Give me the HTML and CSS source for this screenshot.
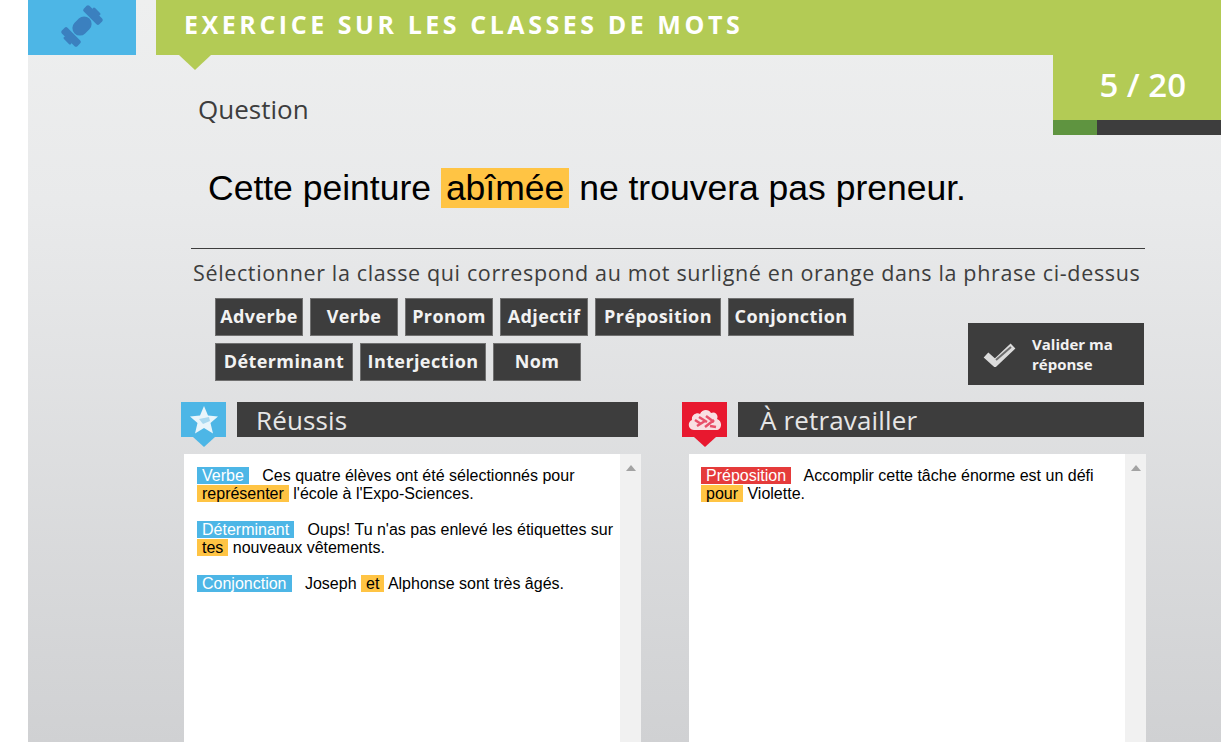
FILE: index.html
```html
<!DOCTYPE html>
<html>

<head>
    <title>Exercice sur les classes de mots</title>
    <link rel="stylesheet" href="styles.css">
</head>

<body>
    <div class="stage">
        <div class="banner">
            <div class="logo-box">
                <svg class="logo" width="56" height="52" viewBox="0 0 56 52">
                    <g transform="rotate(-45 28 26)" fill="#3b80bf">
                        <rect x="17.500" y="18.500" width="21" height="15" rx="7.500"></rect>
                        <rect x="8.500" y="15" width="8" height="22" rx="2"></rect>
                        <rect x="39.500" y="15" width="8" height="22" rx="2"></rect>
                        <rect x="6" y="21" width="3" height="10" rx="1.500"></rect>
                        <rect x="47" y="21" width="3" height="10" rx="1.500"></rect>
                    </g>
                </svg>
            </div>
            <div class="title-band">
                <h1>EXERCICE SUR LES CLASSES DE MOTS</h1>
            </div>
        </div>

        <div class="question-row">
            <h2>Question</h2>
            <div class="counter">
                <div class="count">5 / 20</div>
                <div class="progress">
                    <div class="progress-done"></div>
                </div>
            </div>
        </div>

        <p class="sentence">Cette peinture <span class="word">abîmée</span> ne trouvera pas preneur.</p>

        <div class="instruction">Sélectionner la classe qui correspond au mot surligné en orange dans la phrase ci-dessus</div>

        <div class="answer-row">
            <div class="choices">
                <div class="choice">Adverbe</div>
                <div class="choice">Verbe</div>
                <div class="choice">Pronom</div>
                <div class="choice">Adjectif</div>
                <div class="choice choice-wide">Préposition</div>
                <div class="choice choice-wide">Conjonction</div>
                <div class="choice choice-widest">Déterminant</div>
                <div class="choice choice-wide">Interjection</div>
                <div class="choice">Nom</div>
            </div>
            <div class="validate">
                <svg width="34" height="26" viewBox="0 0 34 26">
                    <path d="M3 14 L12 22 L30 5" fill="none" stroke="#dcdcdc" stroke-width="7"></path>
                    <path d="M13 19 L28 6" fill="none" stroke="#6e6e6e" stroke-width="2"></path>
                </svg>
                <span>Valider ma réponse</span>
            </div>
        </div>

        <div class="results">
            <div class="result">
                <div class="result-head">
                    <div class="badge badge-blue">
                        <svg width="30" height="30" viewBox="0 0 30 30">
                            <path d="M15 1 L19 10.500 L29 11.500 L21.500 18 L24 28.500 L15 23 L6 28.500 L8.500 18 L1 11.500 L11 10.500 Z" fill="#e8f5fb"></path>
                            <path d="M10 14 L20 12 L21 16 L14 19 Z" fill="#a9d9f0"></path>
                        </svg>
                    </div>
                    <div class="result-title">Réussis</div>
                </div>
                <div class="result-list">
                    <div class="list-text">
                        <p><span class="tag tag-blue">Verbe</span> Ces quatre élèves ont été sélectionnés pour <span class="mark">représenter</span> l'école à l'Expo-Sciences.</p>
                        <p><span class="tag tag-blue">Déterminant</span> Oups! Tu n'as pas enlevé les étiquettes sur <span class="mark">tes</span> nouveaux vêtements.</p>
                        <p><span class="tag tag-blue">Conjonction</span> Joseph <span class="mark">et</span> Alphonse sont très âgés.</p>
                    </div>
                    <div class="scroll"><i></i></div>
                </div>
            </div>

            <div class="result result-right">
                <div class="result-head">
                    <div class="badge badge-red">
                        <svg width="34" height="24" viewBox="0 0 34 24">
                            <path d="M6 22 C0 22 -1 14 4 12 C3 7 9 4 12 6 C14 1 21 1 23 5 C27 3 31 7 29 11 C35 13 34 22 28 22 Z" fill="#f9dfe2"></path>
                            <path d="M7 12 L13 16 M11 9 L19 14 M18 8 L26 14 M9 18 L17 13 M17 19 L26 12 M22 18 L28 19" stroke="#e8506a" stroke-width="2.500"></path>
                        </svg>
                    </div>
                    <div class="result-title">À retravailler</div>
                </div>
                <div class="result-list">
                    <div class="list-text">
                        <p><span class="tag tag-red">Préposition</span> Accomplir cette tâche énorme est un défi <span class="mark">pour</span> Violette.</p>
                    </div>
                    <div class="scroll"><i></i></div>
                </div>
            </div>
        </div>
    </div>
</body>

</html>
```

FILE: styles.css
```css
html,
body {
    margin: 0;
    height: 100%;
    overflow: hidden;
    background: #fff;
}

.stage {
    margin-left: 28px;
    height: 742px;
    overflow: hidden;
    background: linear-gradient(#eeefef 0, #e9eaeb 200px, #d0d1d3 742px);
    font-family: "Open Sans", sans-serif;
    color: #3d3d3d;
}

.banner {
    display: flex;
    height: 55px;
}

.logo-box {
    width: 108px;
    margin-right: 20px;
    background: #4db6e6;
    text-align: center;
}

.logo {
    display: block;
    margin: 0 auto;
}

.title-band {
    flex: 1;
    position: relative;
    background: #b3cb55;
}

.title-band::after {
    content: "";
    position: absolute;
    left: 23px;
    top: 55px;
    border-left: 16px solid transparent;
    border-right: 16px solid transparent;
    border-top: 15px solid #b3cb55;
}

h1 {
    margin: 0 0 0 28px;
    color: #fff;
    font-size: 25px;
    font-weight: 700;
    line-height: 49px;
    letter-spacing: 3.55px;
    white-space: nowrap;
}

.question-row {
    display: flex;
    justify-content: space-between;
    height: 80px;
}

h2 {
    margin: 35px 0 0 170px;
    font-size: 26px;
    font-weight: 400;
    line-height: 38px;
}

.counter {
    width: 168px;
    display: flex;
    flex-direction: column;
    background: #b3cb55;
}

.count {
    flex: 1;
    padding-right: 35px;
    color: #fff;
    font-size: 33px;
    font-weight: 600;
    line-height: 60px;
    text-align: right;
}

.progress {
    height: 15px;
    background: #3d3d3d;
}

.progress-done {
    width: 44px;
    height: 100%;
    background: #5f9440;
}

.sentence {
    margin: 33px 0 0 180px;
    color: #000;
    font-family: "Liberation Sans", sans-serif;
    font-size: 35.500px;
    line-height: 40px;
}

.word {
    padding: 0 5px;
    background: #ffc444;
}

.instruction {
    margin: 40px 76px 0 163px;
    padding: 10px 0 0 2px;
    border-top: 1px solid #3d3d3d;
    font-size: 21.500px;
    letter-spacing: 0.640px;
    line-height: 28px;
    white-space: nowrap;
}

.answer-row {
    display: flex;
    margin-top: 11px;
    height: 104px;
}

.choices {
    display: flex;
    flex-wrap: wrap;
    align-content: flex-start;
    gap: 7px;
    width: 650px;
    margin-left: 187px;
}

.choice {
    box-sizing: border-box;
    min-width: 88px;
    height: 38px;
    padding: 0 4px;
    border: 1px solid #707070;
    background: #3d3d3d;
    color: #f2f2f2;
    font-size: 18px;
    font-weight: 700;
    letter-spacing: 0.400px;
    line-height: 35px;
    text-align: center;
}

.choice-wide {
    min-width: 126px;
}

.choice-widest {
    min-width: 138px;
}

.validate {
    display: flex;
    align-items: center;
    width: 176px;
    height: 62px;
    margin: 25px 0 0 103px;
    background: #3d3d3d;
    color: #f2f2f2;
    font-size: 15px;
    font-weight: 700;
    line-height: 20px;
}

.validate svg {
    margin: 0 15px;
    flex: none;
}

.validate span {
    width: 100px;
}

.results {
    display: flex;
    margin-left: 153px;
}

.result {
    flex: none;
    width: 460px;
}

.result-right {
    width: 464px;
    margin-left: 41px;
}

.result-head {
    display: flex;
    height: 52px;
}

.badge {
    position: relative;
    display: flex;
    align-items: center;
    justify-content: center;
    width: 45px;
    height: 35px;
    margin-right: 11px;
}

.badge::after {
    content: "";
    position: absolute;
    left: 12px;
    top: 35px;
    border-left: 11px solid transparent;
    border-right: 11px solid transparent;
    border-top: 10px solid #4db6e6;
}

.badge-blue {
    background: #4db6e6;
}

.badge-red {
    background: #e8182f;
}

.badge-red::after {
    border-top-color: #e8182f;
}

.result-title {
    width: 401px;
    height: 35px;
    padding-left: 19px;
    box-sizing: border-box;
    background: #3d3d3d;
    color: #e6e6e6;
    font-size: 26px;
    letter-spacing: 0.150px;
    line-height: 36px;
}

.result-right .result-title {
    width: 406px;
    padding-left: 22px;
}

.result-list {
    display: flex;
    width: 457px;
    height: 288px;
    margin-left: 3px;
    background: #fff;
}

.result-right .result-list {
    margin-left: 7px;
}

.list-text {
    flex: 1;
    padding: 13px 0 0 13px;
    color: #000;
    font-family: "Liberation Sans", sans-serif;
    font-size: 16px;
    line-height: 18px;
}

.result-right .list-text {
    padding-left: 12px;
}

.list-text p {
    margin: 0 0 18px;
}

.tag {
    margin-right: 9px;
    padding: 0 5px;
    color: #fff;
}

.tag-blue {
    background: #4db6e6;
}

.tag-red {
    background: #e53b3b;
}

.mark {
    padding: 0 5px;
    background: #ffc444;
}

.scroll {
    width: 21px;
    background: #f1f1f1;
    text-align: center;
}

.scroll i {
    display: inline-block;
    margin-top: 8px;
    border-left: 5px solid transparent;
    border-right: 5px solid transparent;
    border-bottom: 6px solid #a3a3a3;
}
```
